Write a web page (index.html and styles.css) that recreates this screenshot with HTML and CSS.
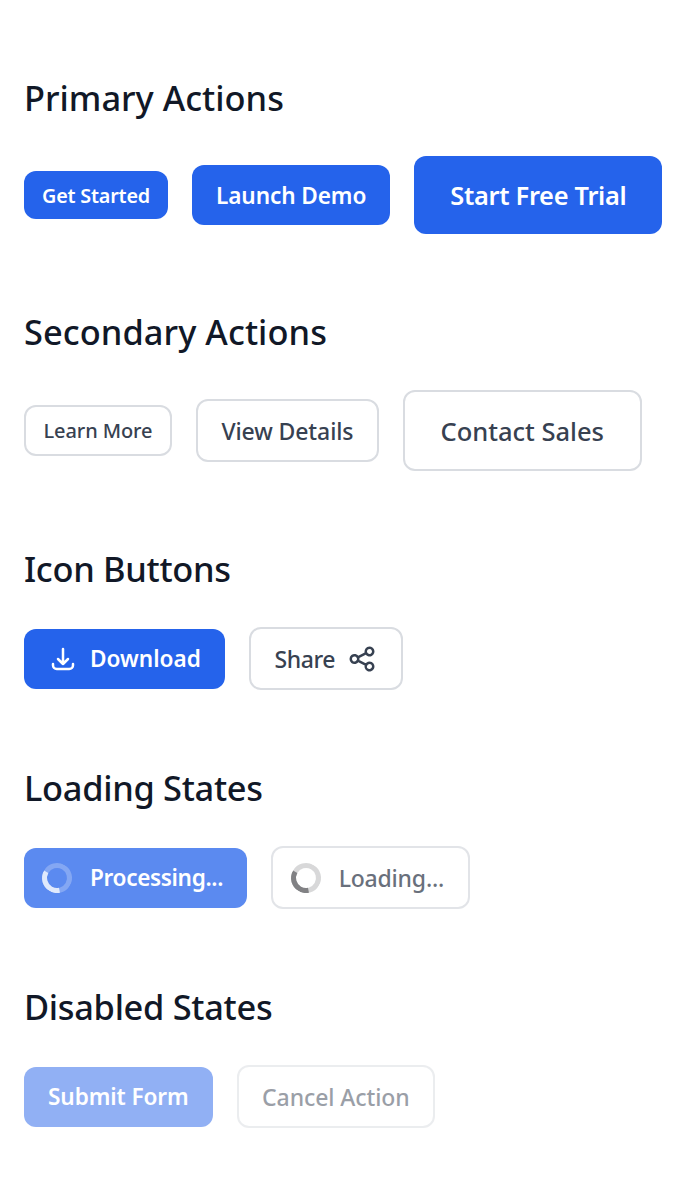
FILE: index.html
```html
<!DOCTYPE html>
<html lang="en">
<head>
<meta charset="utf-8">
<title>Buttons</title>
<link rel="stylesheet" href="styles.css">
</head>
<body>
<main class="page">
<section class="group">
<h2>Primary Actions</h2>
<div class="row">
<button class="btn primary sm">Get Started</button>
<button class="btn primary md">Launch Demo</button>
<button class="btn primary lg">Start Free Trial</button>
</div>
</section>
<section class="group">
<h2 class="loose">Secondary Actions</h2>
<div class="row">
<button class="btn secondary sm">Learn More</button>
<button class="btn secondary md">View Details</button>
<button class="btn secondary lg">Contact Sales</button>
</div>
</section>
<section class="group">
<h2 class="tight">Icon Buttons</h2>
<div class="row">
<button class="btn primary md icon-btn"><svg class="icon" viewBox="0 0 24 24" fill="none" stroke="currentColor" stroke-width="2" stroke-linecap="round" stroke-linejoin="round"><path d="M4 16v1a3 3 0 003 3h10a3 3 0 003-3v-1m-4-4l-4 4m0 0l-4-4m4 4V4"/></svg>Download</button>
<button class="btn secondary md icon-btn share">Share<svg class="icon" viewBox="0 0 24 24" fill="none" stroke="currentColor" stroke-width="2" stroke-linecap="round" stroke-linejoin="round"><path d="M8.684 13.342C8.886 12.938 9 12.482 9 12c0-.482-.114-.938-.316-1.342m0 2.684a3 3 0 110-2.684m0 2.684l6.632 3.316m-6.632-6l6.632-3.316m0 0a3 3 0 105.367-2.684 3 3 0 00-5.367 2.684zm0 9.316a3 3 0 105.368 2.684 3 3 0 00-5.368-2.684z"/></svg></button>
</div>
</section>
<section class="group">
<h2 class="tight">Loading States</h2>
<div class="row">
<button class="btn primary md icon-btn loading"><svg class="spinner" viewBox="0 0 24 24" fill="none"><circle class="track" cx="12" cy="12" r="10" stroke="currentColor" stroke-width="4"/><path class="arc" fill="currentColor" d="M4 12a8 8 0 018-8V0C5.373 0 0 5.373 0 12h4zm2 5.291A7.962 7.962 0 014 12H0c0 3.042 1.135 5.824 3 7.938l3-2.647z"/></svg>Processing...</button>
<button class="btn secondary md icon-btn loading"><svg class="spinner" viewBox="0 0 24 24" fill="none"><circle class="track" cx="12" cy="12" r="10" stroke="currentColor" stroke-width="4"/><path class="arc" fill="currentColor" d="M4 12a8 8 0 018-8V0C5.373 0 0 5.373 0 12h4zm2 5.291A7.962 7.962 0 014 12H0c0 3.042 1.135 5.824 3 7.938l3-2.647z"/></svg>Loading...</button>
</div>
</section>
<section class="group">
<h2 class="tight">Disabled States</h2>
<div class="row">
<button class="btn primary md disabled">Submit Form</button>
<button class="btn secondary md disabled">Cancel Action</button>
</div>
</section>
</main>
</body>
</html>
```
FILE: styles.css
```css
* { box-sizing: border-box; }
body { margin: 0; background: #fff; font-family: "Noto Sans", sans-serif; color: #111827; }
.page { padding: 74px 24px 0; display: flex; flex-direction: column; gap: 74px; }
h2 { margin: 0 0 34px; font-size: 34.4px; line-height: 48px; font-weight: 500; }
h2.tight { letter-spacing: -.3px; }
h2.loose { letter-spacing: .06px; }
.row { display: flex; gap: 24px; align-items: center; }
.btn { font-family: "Noto Sans", sans-serif; font-weight: 500; border-radius: 12px; white-space: nowrap; }
.primary { background: #2563eb; color: #fff; border: 0; font-weight: 600; letter-spacing: -.2px; }
.secondary { background: #fff; color: #374151; border: 2px solid #d9dce1; letter-spacing: -.1px; }
.sm { font-size: 19.8px; height: 48px; padding: 0 18px; }
.md { font-size: 22.6px; height: 60px; padding: 0 24px; }
.lg { font-size: 25.4px; height: 78px; padding: 0 36px; letter-spacing: -.3px; }
.primary.md { letter-spacing: -.1px; }
.secondary.sm { font-size: 20px; height: 51px; padding: 0 17.5px; }
.secondary.md { font-size: 23px; height: 63px; padding: 0 23.5px; }
.secondary.lg { font-size: 25.5px; height: 81px; padding: 0 35.5px; letter-spacing: 0; }
.icon-btn { display: flex; align-items: center; gap: 12px; }
.primary.icon-btn { letter-spacing: 0; }
.share.secondary { letter-spacing: -.4px; }
.icon { width: 30px; height: 30px; flex: none; }
.loading.primary { opacity: .75; letter-spacing: -.35px; }
.loading.secondary { opacity: .75; letter-spacing: -.2px; }
.spinner { width: 30px; height: 30px; flex: none; margin: 0 6px 0 -6px; transform: rotate(-60deg); }
.secondary .spinner { color: #303236; }
.track { opacity: .25; }
.arc { opacity: .75; }
.disabled { opacity: .5; }
```
